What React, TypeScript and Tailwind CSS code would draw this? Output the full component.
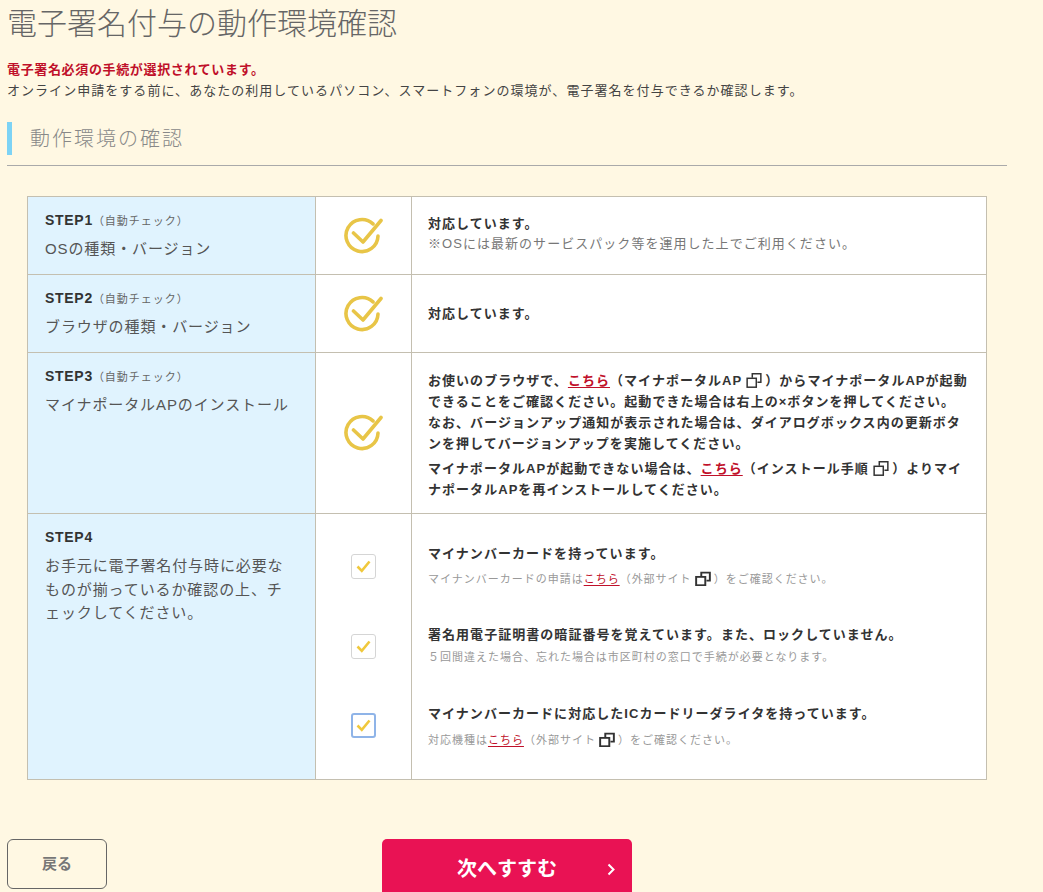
const font = "font-['Liberation_Sans','Noto_Sans_CJK_JP',sans-serif]";

function CheckCircle() {
  return (
    <svg width="39" height="38" viewBox="0 0 39 38" fill="none" stroke="#e8c547" strokeWidth="3.6" strokeLinecap="round" strokeLinejoin="round">
      <path d="M34 19 A16 16 0 1 1 29 6.9" />
      <path d="M9.5 16 L19 25 L37 3.5" />
    </svg>
  );
}

function ExtIcon({ small }: { small?: boolean }) {
  return (
    <svg className="inline-block align-[-3px] -mx-[1px]" width="16" height={small ? 15 : 16} viewBox="0 0 14 14" preserveAspectRatio="none" fill="none" stroke="#333" strokeWidth={small ? 1.7 : 1.3}>
      <rect x="1" y="5.5" width="8" height="7.8" />
      <path d="M5.5 5 V1.5 H13 V9 H10" />
    </svg>
  );
}

function Link() {
  return <span className="text-[#c0102a] underline underline-offset-2">こちら</span>;
}

function CheckBox({ focused }: { focused?: boolean }) {
  return (
    <div className={`w-[25px] h-[25px] bg-white rounded-[3px] flex items-center justify-center ${focused ? "border-2 border-[#8fb4e8]" : "border border-[#d5d5d5]"}`}>
      <svg width="15" height="13" viewBox="0 0 15 13" fill="none" stroke="#f0c83c" strokeWidth="2.6">
        <path d="M1.5 6.5 L5.8 10.8 L13.5 1.5" />
      </svg>
    </div>
  );
}

function StepHead({ n, auto = true }: { n: number; auto?: boolean }) {
  return (
    <div className="flex items-baseline text-[#333]">
      <span className="text-[14px] font-bold tracking-[0.7px]">STEP{n}</span>
      {auto && <span className="text-[11px] text-[#666] tracking-[1px]">（自動チェック）</span>}
    </div>
  );
}

export default function App() {
  return (
    <div className={`${font} w-[1043px] h-[892px] overflow-hidden bg-[#fff8e3] pl-[7px] text-[#333]`}>
      <h1 className="text-[30px] leading-[32px] pt-[8px] text-[#666] font-light">電子署名付与の動作環境確認</h1>

      <p className="mt-[19px] text-[13px] leading-[21px] font-bold text-[#c0102a] tracking-[0.05em]">電子署名必須の手続が選択されています。</p>
      <p className="text-[13px] leading-[21px] text-[#444] tracking-[0.08em]">オンライン申請をする前に、あなたの利用しているパソコン、スマートフォンの環境が、電子署名を付与できるか確認します。</p>

      <div className="w-[1000px] mt-[21px] border-b border-[#aaa] pb-[10px]">
        <div className="border-l-[5px] border-[#7dd3f5] h-[33px] pl-[18px] flex items-center">
          <h2 className="text-[20px] text-[#888] font-light tracking-[0.1em]">動作環境の確認</h2>
        </div>
      </div>

      <div className="ml-[20px] mt-[30px] w-[960px] border border-[#c4bfb0] bg-white">
        {/* STEP1 */}
        <div className="flex h-[78px] border-b border-[#c4bfb0]">
          <div className="w-[288px] bg-[#e0f3fe] border-r border-[#c4bfb0] pl-[17px] pt-[13px]">
            <StepHead n={1} />
            <p className="text-[15px] mt-[7px] text-[#555] tracking-[0.06em]">OSの種類・バージョン</p>
          </div>
          <div className="w-[96px] border-r border-[#c4bfb0] flex items-center justify-center">
            <CheckCircle />
          </div>
          <div className="flex-1 pl-[16px] pb-[4px] flex flex-col justify-center">
            <p className="text-[13px] leading-[20px] font-bold tracking-[0.08em]">対応しています。</p>
            <p className="text-[13px] leading-[20px] text-[#777] tracking-[0.08em]">※OSには最新のサービスパック等を運用した上でご利用ください。</p>
          </div>
        </div>

        {/* STEP2 */}
        <div className="flex h-[78px] border-b border-[#c4bfb0]">
          <div className="w-[288px] bg-[#e0f3fe] border-r border-[#c4bfb0] pl-[17px] pt-[13px]">
            <StepHead n={2} />
            <p className="text-[15px] mt-[7px] text-[#555] tracking-[0.06em]">ブラウザの種類・バージョン</p>
          </div>
          <div className="w-[96px] border-r border-[#c4bfb0] flex items-center justify-center">
            <CheckCircle />
          </div>
          <div className="flex-1 pl-[16px] flex items-center">
            <p className="text-[13px] font-bold tracking-[0.08em]">対応しています。</p>
          </div>
        </div>

        {/* STEP3 */}
        <div className="flex h-[161px] border-b border-[#c4bfb0]">
          <div className="w-[288px] bg-[#e0f3fe] border-r border-[#c4bfb0] pl-[17px] pt-[13px]">
            <StepHead n={3} />
            <p className="text-[15px] mt-[7px] text-[#555] tracking-[0.06em]">マイナポータルAPのインストール</p>
          </div>
          <div className="w-[96px] border-r border-[#c4bfb0] flex items-center justify-center">
            <CheckCircle />
          </div>
          <div className="flex-1 pl-[16px] pt-[17px] text-[13px] leading-[21px] font-bold tracking-[0.08em] whitespace-nowrap">
            <p>
              お使いのブラウザで、<Link />（マイナポータルAP <ExtIcon /> ）からマイナポータルAPが起動
              <br />できることをご確認ください。起動できた場合は右上の×ボタンを押してください。
              <br />なお、バージョンアップ通知が表示された場合は、ダイアログボックス内の更新ボタ
              <br />ンを押してバージョンアップを実施してください。
            </p>
            <p className="mt-[4px]">
              マイナポータルAPが起動できない場合は、<Link />（インストール手順 <ExtIcon /> ）よりマイ
              <br />ナポータルAPを再インストールしてください。
            </p>
          </div>
        </div>

        {/* STEP4 */}
        <div className="flex h-[265px]">
          <div className="w-[288px] bg-[#e0f3fe] border-r border-[#c4bfb0] pl-[17px] pr-[20px] pt-[13px]">
            <StepHead n={4} auto={false} />
            <p className="text-[15px] leading-[23.5px] mt-[6px] text-[#555] tracking-[0.06em]">お手元に電子署名付与時に必要なものが揃っているか確認の上、チェックしてください。</p>
          </div>
          <div className="w-[96px] border-r border-[#c4bfb0] flex flex-col items-center pt-[40px]">
            <CheckBox />
            <div className="mt-[55px]"><CheckBox /></div>
            <div className="mt-[54px]"><CheckBox focused /></div>
          </div>
          <div className="flex-1 pl-[16px] pt-[30px]">
            <div className="h-[81px]">
              <p className="text-[13px] leading-[20px] font-bold tracking-[0.08em]">マイナンバーカードを持っています。</p>
              <p className="text-[11px] leading-[16px] mt-[7px] text-[#999] tracking-[0.09em]">マイナンバーカードの申請は<Link />（外部サイト <ExtIcon small /> ）をご確認ください。</p>
            </div>
            <div className="h-[79px]">
              <p className="text-[13px] leading-[20px] font-bold tracking-[0.08em]">署名用電子証明書の暗証番号を覚えています。また、ロックしていません。</p>
              <p className="text-[11px] leading-[14px] mt-[5px] text-[#999] tracking-[0.09em]">５回間違えた場合、忘れた場合は市区町村の窓口で手続が必要となります。</p>
            </div>
            <div>
              <p className="text-[13px] leading-[20px] font-bold tracking-[0.08em]">マイナンバーカードに対応したICカードリーダライタを持っています。</p>
              <p className="text-[11px] leading-[16px] mt-[8px] text-[#999] tracking-[0.09em]">対応機種は<Link />（外部サイト <ExtIcon small /> ）をご確認ください。</p>
            </div>
          </div>
        </div>
      </div>

      <div className="mt-[59px] flex items-start">
        <button className="w-[100px] h-[50px] border border-[#666] rounded-[6px] text-[15px] font-bold text-[#777]">戻る</button>
        <button className="relative ml-[275px] w-[250px] h-[60px] bg-[#e91254] rounded-t-[5px] text-white text-[20px] font-bold">
          次へすすむ
          <svg className="absolute right-[17px] top-[24px]" width="8" height="13" viewBox="0 0 8 13" fill="none" stroke="white" strokeWidth="2">
            <path d="M1.5 1.5 L6.5 6.5 L1.5 11.5" />
          </svg>
        </button>
      </div>
    </div>
  );
}
